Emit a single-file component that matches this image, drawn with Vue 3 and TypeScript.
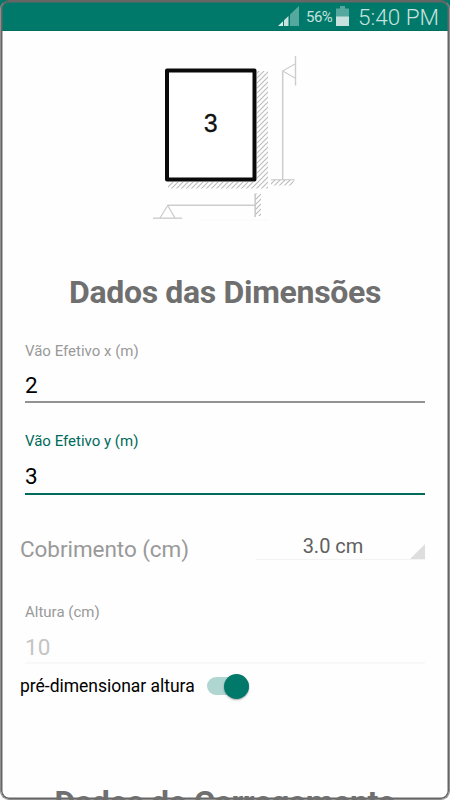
<script setup lang="ts">
import { ref } from 'vue'

const spanX = ref('2')
const spanY = ref('3')
const cover = ref('3.0 cm')
const height = ref('10')
const autoHeight = ref(true)
</script>

<template>
  <main class="screen">
    <header class="status-bar">
      <svg class="signal" width="21" height="21" viewBox="0 0 21 21">
        <path d="M21 0V20H12V8.6Z" fill="#54a89d" />
        <path d="M0 20L5 15.2V20Z" fill="#d5ebe8" />
        <path d="M6 20V14.3L10.5 10V20Z" fill="#c7e2de" />
      </svg>
      <span class="percent">56%</span>
      <svg class="battery" width="13" height="20" viewBox="0 0 13 20">
        <path d="M4 0H9V2.5H13V20H0V2.5H4Z" fill="#54a89d" />
        <path d="M0 10.5H13V20H0Z" fill="#c7e2de" />
      </svg>
      <span class="clock">5:40 PM</span>
    </header>

    <svg class="slab" width="170" height="190" viewBox="140 40 170 190">
      <defs>
        <pattern id="hatch" width="5" height="5" patternUnits="userSpaceOnUse">
          <path d="M-1 6L6 -1M-1 1L1 -1M4 6L6 4" stroke="#bcbcbc" stroke-width="1.1" />
        </pattern>
      </defs>
      <path d="M257 71H268V188.500H168V182H257Z" fill="url(#hatch)" />
      <rect x="167" y="70.500" width="87.500" height="109" fill="#fff" stroke="#0a0a0a" stroke-width="4" stroke-linejoin="round" />
      <text x="210.800" y="131.500" text-anchor="middle" class="slab-number">3</text>
      <g fill="none" stroke="#cdcdcd">
        <path d="M282.700 71V179" stroke-width="1.500" />
        <path d="M295.500 56V85.500" stroke-width="1.400" />
        <path d="M295 64L282.700 71L295 78" stroke-width="1.100" />
        <path d="M271 179.700H294.500" stroke-width="1.200" />
        <path d="M168 205.300H255" stroke-width="1.400" />
        <path d="M153 218.200H182" stroke-width="1.400" />
        <path d="M160 218L167.700 205.500L175 218" stroke-width="1.300" />
        <path d="M255.200 193.500V217" stroke-width="1.700" />
        <path d="M200 220H270" stroke="#f9f9f9" stroke-width="1" />
      </g>
      <path d="M271 180H294.500L292 185.500H271Z" fill="url(#hatch)" />
      <path d="M255.500 193.500H261V216H255.500Z" fill="url(#hatch)" />
    </svg>

    <h1 class="title">Dados das Dimensões</h1>

    <label class="field">
      <span class="label">Vão Efetivo x (m)</span>
      <span class="value">{{ spanX }}</span>
    </label>
    <label class="field active">
      <span class="label">Vão Efetivo y (m)</span>
      <span class="value">{{ spanY }}</span>
    </label>

    <div class="cover-row">
      <span class="cover-label">Cobrimento (cm)</span>
      <div class="spinner">
        <span>{{ cover }}</span>
        <svg class="corner" width="15" height="15" viewBox="0 0 15 15">
          <path d="M15 0V15H0Z" fill="#dedede" />
        </svg>
      </div>
    </div>

    <label class="field disabled">
      <span class="label">Altura (cm)</span>
      <span class="value">{{ height }}</span>
    </label>

    <div class="switch-row" @click="autoHeight = !autoHeight">
      <span class="switch-label">pré-dimensionar altura</span>
      <span class="switch" :class="{ on: autoHeight }"><i class="thumb"></i></span>
    </div>

    <div class="frame"></div>
    <h1 class="title next">Dados do Carregamento</h1>
  </main>
</template>

<style>
body {
  margin: 0;
  background: #fff;
  overflow: hidden;
}
</style>

<style scoped>
.screen {
  position: relative;
  box-sizing: border-box;
  width: 450px;
  height: 800px;
  overflow: hidden;
  display: flex;
  flex-direction: column;
  background: #fefefe;
  font-family: Roboto, sans-serif;
  color: #000;
}
.screen > * {
  flex-shrink: 0;
}
.status-bar {
  box-sizing: border-box;
  height: 31px;
  padding: 3px 12px 0 0;
  display: flex;
  align-items: center;
  justify-content: flex-end;
  background: #00796b;
  border-bottom: 1px solid #006f60;
  color: #c7e2de;
  white-space: nowrap;
}
.signal {
  margin: 0 7px 1px 0;
}
.percent {
  width: 27px;
  font-size: 15px;
  letter-spacing: -0.500px;
}
.battery {
  margin: 0 9px 1px 3px;
}
.clock {
  width: 80px;
  font-size: 22.500px;
  line-height: 28px;
  font-weight: 300;
}
.slab {
  display: block;
  margin: 9px 0 0 140px;
}
.slab-number {
  font: 25px "Liberation Sans", sans-serif;
  fill: #111;
  stroke: #111;
  stroke-width: 0.300px;
}
.title {
  height: 38px;
  margin: 43px 0 0;
  text-align: center;
  font-size: 32px;
  line-height: 38px;
  font-weight: 700;
  letter-spacing: -0.330px;
  color: #6f6f6f;
  white-space: nowrap;
}
.field {
  box-sizing: border-box;
  display: flex;
  flex-direction: column;
  width: 400px;
  height: 61px;
  margin: 31px 0 0 25px;
  border-bottom: 2px solid #929292;
}
.label {
  font-size: 15px;
  line-height: 18px;
  color: #999;
}
.value {
  margin-top: 10px;
  font-size: 22.500px;
  line-height: 30px;
}
.active {
  height: 63px;
  margin-top: 29px;
  border-color: #006a5b;
}
.active .label {
  color: #006a5b;
}
.disabled {
  height: 61px;
  margin-top: 42px;
  border-bottom: 2px solid #f8f8f8;
}
.disabled .value {
  margin-top: 11px;
  color: #c4c4c4;
}
.active .value {
  margin-top: 11px;
}
.cover-row {
  display: flex;
  justify-content: space-between;
  height: 34px;
  margin: 32px 25px 0 20px;
}
.cover-label {
  padding-top: 6px;
  font-size: 22.500px;
  letter-spacing: -0.060px;
  line-height: 32px;
  color: #999;
}
.spinner {
  position: relative;
  box-sizing: border-box;
  width: 169px;
  height: 33px;
  padding-right: 15px;
  border-bottom: 1px solid #f3f3f3;
  text-align: center;
  font-size: 20px;
  line-height: 38px;
  color: #606060;
}
.corner {
  position: absolute;
  right: 0;
  bottom: 0;
}
.switch-row {
  display: flex;
  align-items: center;
  height: 32px;
  margin: 6px 0 0 20px;
}
.switch-label {
  width: 187px;
  font-size: 17.500px;
  line-height: 24px;
  letter-spacing: -0.020px;
}
.switch {
  display: flex;
  align-items: center;
  width: 42px;
  height: 18px;
  border-radius: 9px;
  background: #c5c5c5;
}
.switch.on {
  justify-content: flex-end;
  background: #b0d6d2;
}
.thumb {
  width: 25px;
  height: 25px;
  border-radius: 50%;
  background: #eee;
  box-shadow: 0 1px 2px rgba(0, 0, 0, 0.350);
}
.on .thumb {
  background: #00796b;
}
.next {
  position: relative;
  margin-top: 81px;
}
.frame {
  position: absolute;
  inset: 0;
  box-sizing: border-box;
  border: 1px solid #8f8f8f;
  border-top-color: #666;
  border-radius: 9px;
  box-shadow: inset 0 0 0 1.500px #666;
  pointer-events: none;
}
</style>
